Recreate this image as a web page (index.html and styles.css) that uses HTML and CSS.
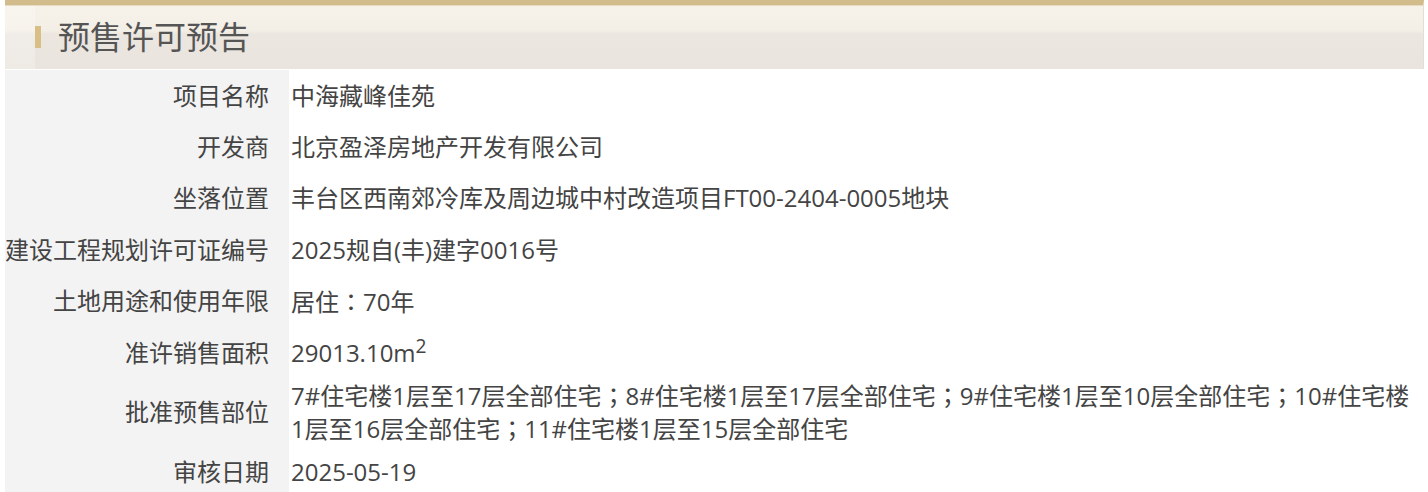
FILE: index.html
```html
<!DOCTYPE html>
<html lang="zh-CN">
<head>
  <meta charset="UTF-8" />
  <title>预售许可预告</title>
  <link rel="stylesheet" href="styles.css">
</head>
<body>
  <div class="panel">
    <div class="panel-head">
      <span class="mark"></span>
      <h2>预售许可预告</h2>
    </div>

    <table class="info-table">
      <tbody>
        <tr>
          <th>项目名称</th>
          <td>中海藏峰佳苑</td>
        </tr>
        <tr>
          <th>开发商</th>
          <td>北京盈泽房地产开发有限公司</td>
        </tr>
        <tr>
          <th>坐落位置</th>
          <td>丰台区西南郊冷库及周边城中村改造项目FT00-2404-0005地块</td>
        </tr>
        <tr>
          <th>建设工程规划许可证编号</th>
          <td>2025规自(丰)建字0016号</td>
        </tr>
        <tr>
          <th>土地用途和使用年限</th>
          <td>居住<span class="punct" lang="zh-TW">：</span>70年</td>
        </tr>
        <tr>
          <th>准许销售面积</th>
          <td>29013.10m<sup>2</sup></td>
        </tr>
        <tr>
          <th>批准预售部位</th>
          <td>7#住宅楼1层至17层全部住宅<span class="punct" lang="zh-TW">；</span>8#住宅楼1层至17层全部住宅<span class="punct" lang="zh-TW">；</span>9#住宅楼1层至10层全部住宅<span class="punct" lang="zh-TW">；</span>10#住宅楼1层至16层全部住宅<span class="punct" lang="zh-TW">；</span>11#住宅楼1层至15层全部住宅</td>
        </tr>
        <tr>
          <th>审核日期</th>
          <td>2025-05-19</td>
        </tr>
      </tbody>
    </table>
  </div>
</body>
</html>
```

FILE: styles.css
```css
body {
  margin: 0;
  padding: 0 4px 0 5px;
  background-color: #fff;
  font-family: "Open Sans", "Noto Sans CJK SC", sans-serif;
  color: #444;
}
.panel {
  width: 100%;
}
.panel-head {
  display: flex;
  align-items: center;
  height: 64px;
  border-top: 5px solid #d3bc8b;
  border-right: 1px solid #e4ded2;
  background: linear-gradient(to bottom, #f6f2ea 0%, #f4efe6 40%, #ebe6df 45%, #e9e4dd 100%);
  box-shadow: inset 0 1px 0 #e8dcc0, inset 30px 0 0 rgba(255, 255, 255, 0.25);
  padding-left: 30px;
}
.mark {
  width: 6px;
  height: 22px;
  background-color: #d9bf86;
  margin-right: 17px;
}
.panel-head h2 {
  margin: 0;
  font-family: "Noto Sans CJK SC", sans-serif;
  font-size: 32px;
  font-weight: normal;
  color: #555;
  line-height: 1;
  padding-bottom: 4px;
}
.info-table {
  width: 100%;
  border-collapse: collapse;
  margin-top: 1px;
  font-size: 24px;
}
.info-table th,
.info-table td {
  height: 49.4px;
  padding: 1px 0;
  line-height: 32px;
  font-weight: normal;
  vertical-align: middle;
}
.info-table th {
  width: 263px;
  padding-right: 20px;
  text-align: right;
  background-color: #f3f3f3;
  white-space: nowrap;
}
.info-table td {
  padding-left: 2px;
  padding-right: 8px;
}
.info-table sup {
  font-size: 0.8em;
  line-height: 0;
}
.punct {
  font-family: "Noto Sans CJK TC", sans-serif;
}
```
